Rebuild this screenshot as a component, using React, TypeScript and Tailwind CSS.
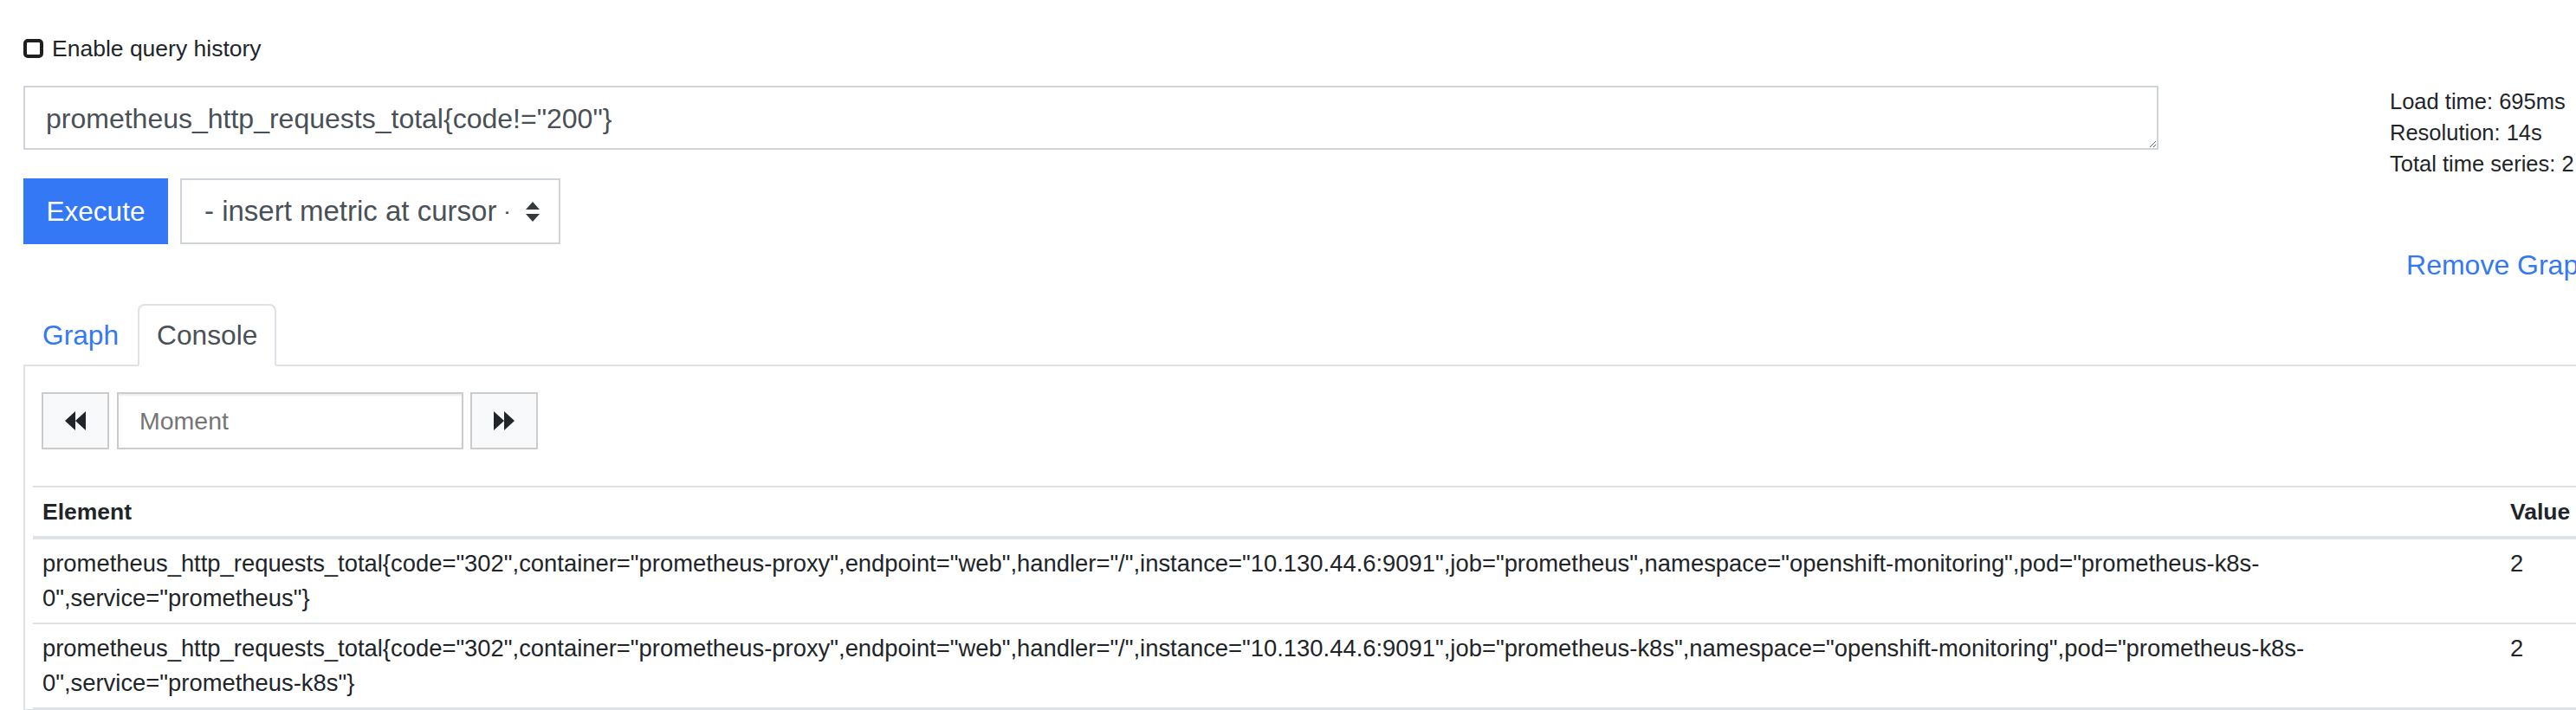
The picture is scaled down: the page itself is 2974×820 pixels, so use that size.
import React from "react";

/**
 * Prometheus expression panel — console tab with two series.
 * Screenshot is 2x, so every size below is doubled from the usual Bootstrap values.
 */

const series = [
  {
    head: 'prometheus_http_requests_total{code="302",container="prometheus-proxy",endpoint="web",handler="/",instance="10.130.44.6:9091",job="prometheus",namespace="openshift-monitoring",pod="prometheus-k8s-',
    tail: '0",service="prometheus"}',
    value: "2",
  },
  {
    head: 'prometheus_http_requests_total{code="302",container="prometheus-proxy",endpoint="web",handler="/",instance="10.130.44.6:9091",job="prometheus-k8s",namespace="openshift-monitoring",pod="prometheus-k8s-',
    tail: '0",service="prometheus-k8s"}',
    value: "2",
  },
];

function BackwardIcon() {
  return (
    <svg width="24" height="22" viewBox="0 0 24 22" fill="#212529">
      <polygon points="0,11 12,0 12,22" />
      <polygon points="12,11 24,0 24,22" />
    </svg>
  );
}

function ForwardIcon() {
  return (
    <svg width="24" height="22" viewBox="0 0 24 22" fill="#212529">
      <polygon points="0,0 12,11 0,22" />
      <polygon points="12,0 24,11 12,22" />
    </svg>
  );
}

function SelectArrows() {
  return (
    <svg width="16" height="23" viewBox="0 0 16 23" fill="#343a40">
      <polygon points="8,0 16,9 0,9" />
      <polygon points="0,14 16,14 8,23" />
    </svg>
  );
}

export default function App() {
  return (
    <div className="h-[820px] w-[2974px] overflow-hidden bg-white font-['Liberation_Sans',Arial,sans-serif] text-[#212529]">
      <div className="w-[3022px] px-[27px] pt-[38px]">
        {/* Query history toggle */}
        <label className="flex h-[36px] items-center">
          <span className="h-[22px] w-[23px] rounded-[5px] border-4 border-[#1f1f1f]" />
          <span className="ml-[10px] text-[26.5px] leading-[36px]">Enable query history</span>
        </label>

        {/* Expression + stats */}
        <div className="mt-[25px] flex">
          <div className="w-[2465px]">
            <textarea
              readOnly
              rows={1}
              value={'prometheus_http_requests_total{code!="200"}'}
              className="block h-[74px] w-full border-2 border-[#ced4da] bg-white pt-[12px] pb-[10px] pl-[24px] text-[32px] leading-[48px] text-[#495057] outline-none"
            />
            <div className="mt-[33px] flex">
              <button
                type="button"
                className="h-[76px] w-[167px] bg-[#3478f6] text-[31.5px] leading-[48px] text-white"
              >
                Execute
              </button>
              <div className="ml-[14px] flex h-[76px] w-[439px] items-center justify-between border-2 border-[#ced4da] bg-white pr-[22px] pl-[26px]">
                {/* the option text is wider than the select, so its last dash is clipped */}
                <span className="block w-[351px] overflow-hidden whitespace-nowrap text-[33px] leading-[48px] text-[#495057]">
                  - insert metric at cursor -
                </span>
                <SelectArrows />
              </div>
            </div>
          </div>
          <div className="ml-auto w-[236px] whitespace-nowrap text-[25.5px] leading-[36px]">
            <div>Load time: 695ms</div>
            <div>Resolution: 14s</div>
            <div>Total time series: 2</div>
          </div>
        </div>

        <div className="text-right text-[32px] leading-[48px] text-[#3478f6]">Remove Graph</div>

        {/* Tabs */}
        <ul className="mt-[21px] flex border-b-2 border-[#dee2e6]">
          <li className="-mb-[2px] rounded-t-[8px] border-2 border-transparent px-[20px] py-[10px] text-[31.7px] leading-[48px] text-[#3478f6]">
            Graph
          </li>
          <li className="-mb-[2px] rounded-t-[8px] border-2 border-[#dee2e6] border-b-white bg-white px-[20px] py-[10px] text-[31.7px] leading-[48px] text-[#495057]">
            Console
          </li>
        </ul>

        <div className="border-2 border-t-0 border-[#dee2e6] px-[9px] pt-[30px]">
          {/* Moment picker */}
          <div className="ml-[10px] flex h-[66px]">
            <button
              type="button"
              className="flex h-[66px] w-[78px] items-center justify-center border-2 border-[#ccc] bg-[#f8f9fa]"
            >
              <BackwardIcon />
            </button>
            <input
              placeholder="Moment"
              className="ml-[9px] h-[66px] w-[400px] border-2 border-[#ccc] bg-white pl-[24px] text-[28.5px] text-[#495057] shadow-[inset_0_2px_2px_rgba(0,0,0,0.08)] outline-none placeholder:text-[#757575]"
            />
            <button
              type="button"
              className="ml-[8px] flex h-[66px] w-[78px] items-center justify-center border-2 border-[#ccc] bg-[#f8f9fa]"
            >
              <ForwardIcon />
            </button>
          </div>

          {/* Result table */}
          <table className="mt-[42px] w-full table-fixed border-separate border-spacing-0">
            <thead>
              <tr>
                <th className="border-t-2 border-b-4 border-[#dee2e6] px-[11px] py-[8px] text-left text-[26.5px] leading-[40px] font-bold">
                  Element
                </th>
                <th className="w-[97px] border-t-2 border-b-4 border-[#dee2e6] px-[11px] py-[8px] text-left text-[26.5px] leading-[40px] font-bold">
                  Value
                </th>
              </tr>
            </thead>
            <tbody>
              {series.map((s, i) => (
                <tr key={i}>
                  <td className="border-b-2 border-[#dee2e6] px-[11px] py-[8px] align-top text-[27.4px] leading-[40px]">
                    {s.head}
                    <wbr />
                    {s.tail}
                  </td>
                  <td className="border-b-2 border-[#dee2e6] px-[11px] py-[8px] align-top text-[27.4px] leading-[40px]">
                    {s.value}
                  </td>
                </tr>
              ))}
            </tbody>
          </table>
        </div>
      </div>
    </div>
  );
}
